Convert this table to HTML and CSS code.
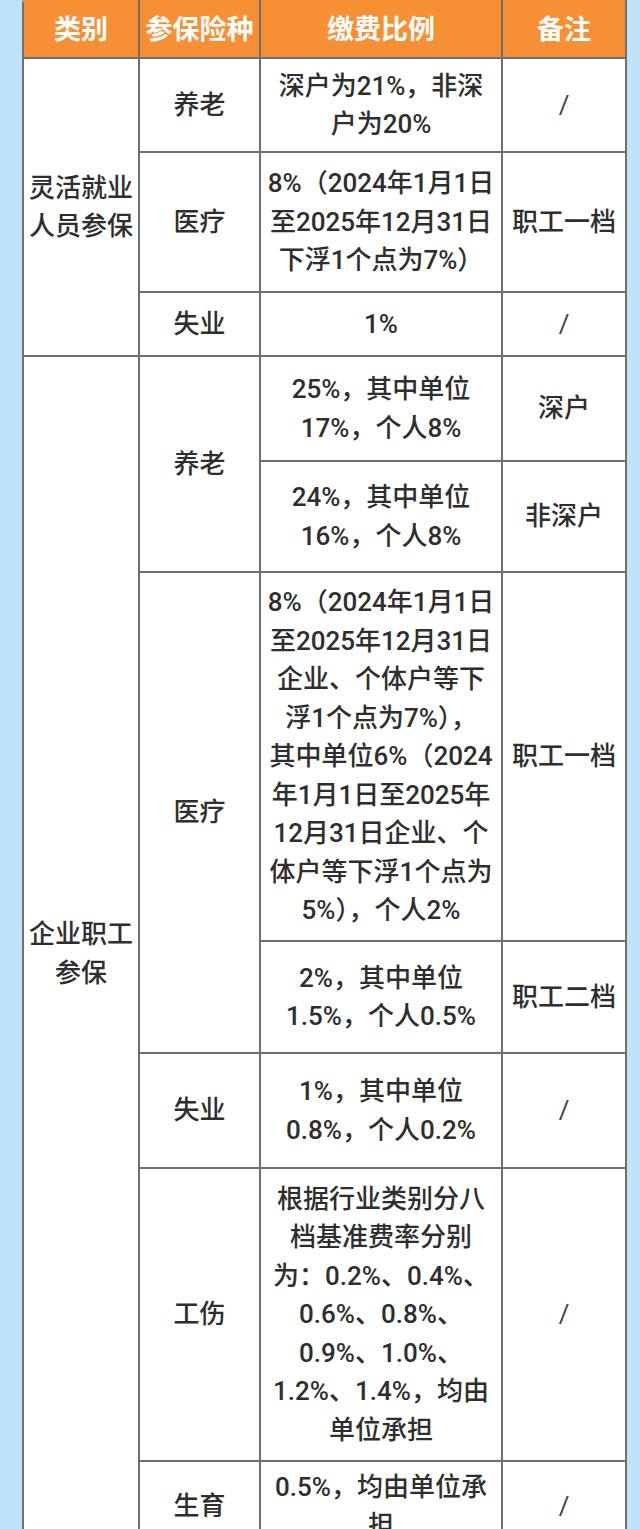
FILE: index.html
```html
<!DOCTYPE html>
<html lang="zh-CN">
<head>
<meta charset="utf-8">
<title>社保缴费比例</title>
<link rel="stylesheet" href="styles.css">
</head>
<body>
<div class="page">
<table class="rates">
  <colgroup>
    <col class="c1"><col class="c2"><col class="c3"><col class="c4">
  </colgroup>
  <thead>
    <tr class="head">
      <th>类别</th><th>参保险种</th><th>缴费比例</th><th>备注</th>
    </tr>
  </thead>
  <tbody>
    <tr class="r1">
      <td rowspan="3" class="cat">灵活就业<br>人员参保</td>
      <td>养老</td>
      <td>深户为21%，非深<br>户为20%</td>
      <td class="slash">/</td>
    </tr>
    <tr class="r2">
      <td>医疗</td>
      <td>8%（2024年1月1日<br>至2025年12月31日<br>下浮1个点为7%）</td>
      <td>职工一档</td>
    </tr>
    <tr class="r3">
      <td>失业</td>
      <td>1%</td>
      <td class="slash">/</td>
    </tr>
    <tr class="r4">
      <td rowspan="7" class="cat">企业职工<br>参保</td>
      <td rowspan="2">养老</td>
      <td>25%，其中单位<br>17%，个人8%</td>
      <td>深户</td>
    </tr>
    <tr class="r5">
      <td>24%，其中单位<br>16%，个人8%</td>
      <td>非深户</td>
    </tr>
    <tr class="r6">
      <td rowspan="2">医疗</td>
      <td>8%（2024年1月1日<br>至2025年12月31日<br>企业、个体户等下<br>浮1个点为7%），<br>其中单位6%（2024<br>年1月1日至2025年<br>12月31日企业、个<br>体户等下浮1个点为<br>5%），个人2%</td>
      <td>职工一档</td>
    </tr>
    <tr class="r7">
      <td>2%，其中单位<br>1.5%，个人0.5%</td>
      <td>职工二档</td>
    </tr>
    <tr class="r8">
      <td>失业</td>
      <td>1%，其中单位<br>0.8%，个人0.2%</td>
      <td class="slash">/</td>
    </tr>
    <tr class="r9">
      <td>工伤</td>
      <td>根据行业类别分八<br>档基准费率分别<br>为：0.2%、0.4%、<br>0.6%、0.8%、<br>0.9%、1.0%、<br>1.2%、1.4%，均由<br>单位承担</td>
      <td class="slash">/</td>
    </tr>
    <tr class="r10">
      <td>生育</td>
      <td>0.5%，均由单位承<br>担</td>
      <td class="slash">/</td>
    </tr>
  </tbody>
</table>
</div>
</body>
</html>
```

FILE: styles.css
```css
html, body {
  margin: 0;
  padding: 0;
  background: #bfe3f8;
}

.page {
  padding-left: 22px;
  height: 1529px;
  overflow: hidden;
}

.rates {
  border-collapse: collapse;
  table-layout: fixed;
  width: 605px;
  background: #ffffff;
  font-family: Roboto, "Noto Sans CJK SC", sans-serif;
  color: #2e2e2e;
}

.c1 { width: 116px; }
.c2 { width: 121px; }
.c3 { width: 242px; }
.c4 { width: 124px; }

.rates th,
.rates td {
  border: 2px solid #6f6f6f;
  text-align: center;
  vertical-align: middle;
  padding: 0 2px;
  white-space: nowrap;
}

.rates td {
  font-size: 26px;
  font-weight: 500;
  line-height: 38.5px;
}

.rates td.slash {
  font-weight: 400;
  color: #444;
}

.head th {
  background: #f78f35;
  color: #ffffff;
  font-size: 27px;
  font-weight: 700;
  height: 55px;
  line-height: 30px;
  border-top-color: #f78f35;
}

.r1 { height: 94px; }
.r2 { height: 140px; }
.r3 { height: 64px; }
.r4 { height: 105px; }
.r5 { height: 111px; }
.r6 { height: 369px; }
.r7 { height: 112px; }
.r8 { height: 115px; }
.r9 { height: 293px; }
.r10 { height: 90px; }
```
